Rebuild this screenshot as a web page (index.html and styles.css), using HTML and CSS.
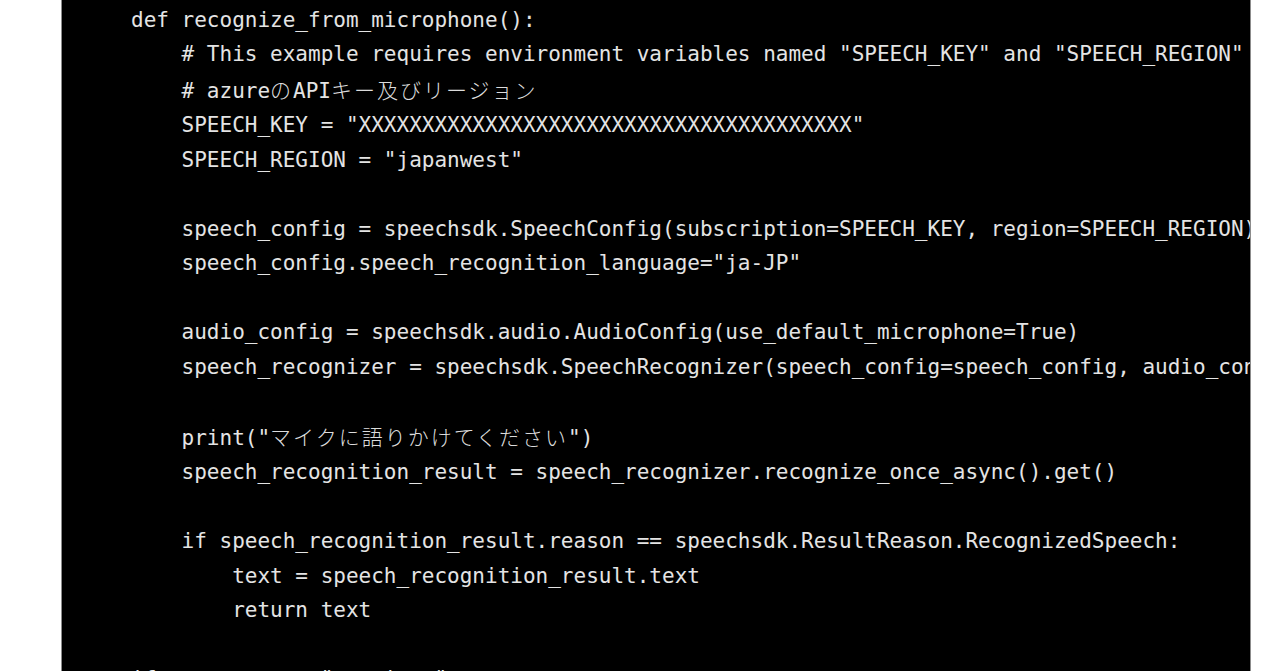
FILE: index.html
```html
<!DOCTYPE html>
<html lang="ja">
<head>
<meta charset="utf-8">
<title>recognize_from_microphone</title>
<link rel="stylesheet" href="styles.css">
</head>
<body>
<div class="page">
<pre class="code">def recognize_from_microphone():
    # This example requires environment variables named "SPEECH_KEY" and "SPEECH_REGION"
    # azure<span class="jp">の</span>API<span class="jp">キー及びリージョン</span>
    SPEECH_KEY = "XXXXXXXXXXXXXXXXXXXXXXXXXXXXXXXXXXXXXXX"
    SPEECH_REGION = "japanwest"

    speech_config = speechsdk.SpeechConfig(subscription=SPEECH_KEY, region=SPEECH_REGION)
    speech_config.speech_recognition_language="ja-JP"

    audio_config = speechsdk.audio.AudioConfig(use_default_microphone=True)
    speech_recognizer = speechsdk.SpeechRecognizer(speech_config=speech_config, audio_config=audio_config)

    print("<span class="jp">マイクに語りかけてください</span>")
    speech_recognition_result = speech_recognizer.recognize_once_async().get()

    if speech_recognition_result.reason == speechsdk.ResultReason.RecognizedSpeech:
        text = speech_recognition_result.text
        return text

if __name__ == "__main__":
    main()
</pre>
</div>
</body>
</html>
```

FILE: styles.css
```css
html, body {
  margin: 0;
  padding: 0;
  background: #ffffff;
  height: 671px;
  overflow: hidden;
}

.page {
  display: flex;
  height: 671px;
  padding-left: 61px;
}

.code {
  margin: 0;
  width: 1190px;
  height: 671px;
  box-sizing: border-box;
  background: #000000;
  border-left: 1px solid #8c8c8c;
  border-right: 1px solid #8c8c8c;
  padding: 2.5px 0 0 69px;
  overflow: hidden;
  color: #e4e4e4;
  font-family: "DejaVu Sans Mono", "Liberation Mono", "Noto Sans CJK JP", monospace;
  font-size: 21px;
  line-height: 34.5px;
  white-space: pre;
}

.jp {
  font-family: "Noto Sans CJK JP", sans-serif;
  font-weight: 300;
  letter-spacing: 2px;
  color: #dcdcdc;
}
```
